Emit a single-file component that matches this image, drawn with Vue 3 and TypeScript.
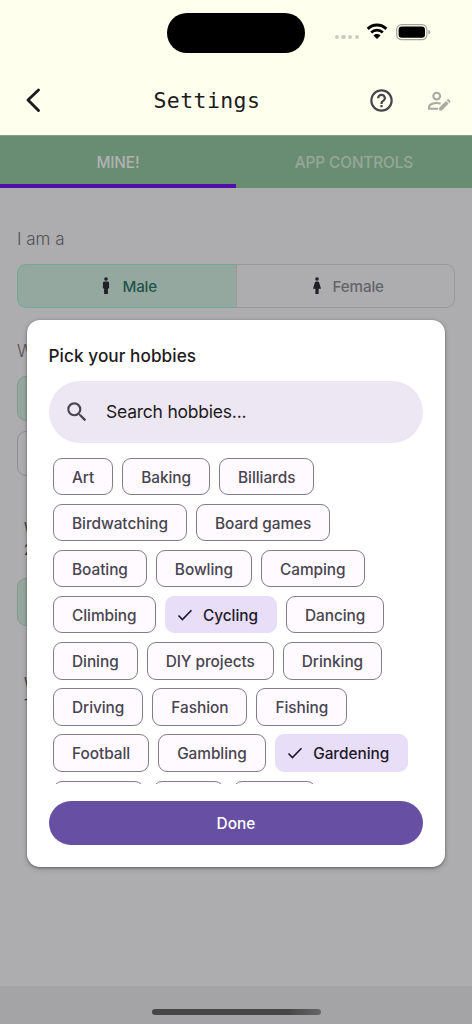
<script setup lang="ts">
interface Hobby {
  name: string
  selected?: boolean
}

const rows: Hobby[][] = [
  [{ name: 'Art' }, { name: 'Baking' }, { name: 'Billiards' }],
  [{ name: 'Birdwatching' }, { name: 'Board games' }],
  [{ name: 'Boating' }, { name: 'Bowling' }, { name: 'Camping' }],
  [{ name: 'Climbing' }, { name: 'Cycling', selected: true }, { name: 'Dancing' }],
  [{ name: 'Dining' }, { name: 'DIY projects' }, { name: 'Drinking' }],
  [{ name: 'Driving' }, { name: 'Fashion' }, { name: 'Fishing' }],
  [{ name: 'Football' }, { name: 'Gambling' }, { name: 'Gardening', selected: true }],
]
</script>

<template>
  <div class="screen">
    <header class="top">
      <div class="island"></div>
      <div class="status">
        <span class="dots"><i></i><i></i><i></i><i></i></span>
        <svg class="wifi" viewBox="0 0 22 16">
          <path d="M1.7 5.6A13.2 13.2 0 0 1 20.3 5.6" fill="none" stroke="#000" stroke-width="2.9" />
          <path d="M5.2 9.3A8.3 8.3 0 0 1 16.8 9.3" fill="none" stroke="#000" stroke-width="2.7" />
          <path d="M11 15.7L7.5 12.2A5 5 0 0 1 14.5 12.2Z" />
        </svg>
        <svg class="battery" viewBox="0 0 35 17">
          <rect x=".7" y=".7" width="30.2" height="15" rx="4.8" fill="none" stroke="#a4a599" stroke-width="1.2" />
          <rect x="2.6" y="2.6" width="26.4" height="11.2" rx="3.2" />
          <path d="M32.4 5.8q1.9.7 1.9 2.4t-1.9 2.4z" fill="#a4a599" />
        </svg>
      </div>
      <div class="bar">
        <svg class="back" viewBox="0 0 16 26"><path d="M13.5 3L3 13L13.5 23.5" fill="none" stroke="#1d1b20" stroke-width="2.9" stroke-linecap="round" stroke-linejoin="round" /></svg>
        <h1>Settings</h1>
        <svg class="help" viewBox="0 0 24 24"><path d="M11 18h2v-2h-2v2m1-16A10 10 0 0 0 2 12a10 10 0 0 0 10 10 10 10 0 0 0 10-10A10 10 0 0 0 12 2m0 18c-4.41 0-8-3.59-8-8s3.59-8 8-8 8 3.59 8 8-3.59 8-8 8m0-14a4 4 0 0 0-4 4h2a2 2 0 0 1 2-2 2 2 0 0 1 2 2c0 2-3 1.75-3 5h2c0-2.25 3-2.5 3-5a4 4 0 0 0-4-4z" /></svg>
        <svg class="edit" viewBox="0 0 24 20">
          <circle cx="9.7" cy="5.1" r="3.4" fill="none" stroke="#aaa9a2" stroke-width="2.1" />
          <path d="M11.2 17.8H2.1V16C2.1 13.3 6.7 12 9.7 12Q11.6 12 13.6 12.6" fill="none" stroke="#aaa9a2" stroke-width="2.1" />
          <path d="M12.2 16.8L19 10L21.6 12.6L14.8 19.4H12.2ZM19.7 9.3L20.7 8.3Q21.2 7.9 21.7 8.3L23.3 9.9Q23.7 10.4 23.3 10.9L22.3 11.9Z" />
        </svg>
      </div>
    </header>

    <nav class="tabs">
      <div class="tab active">MINE!</div>
      <div class="tab">APP CONTROLS</div>
    </nav>

    <main class="form">
      <p class="label">I am a</p>
      <div class="segments">
        <div class="seg on">
          <svg viewBox="0 0 10 18"><circle cx="5" cy="2" r="1.8" /><path d="M3.4 4.6h3.2a1.5 1.5 0 0 1 1.5 1.5v5.3H6.9V17H3.1v-5.6H1.9V6.1a1.5 1.5 0 0 1 1.5-1.5z" /></svg>
          Male
        </div>
        <div class="seg">
          <svg viewBox="0 0 10 18"><circle cx="5" cy="2" r="1.8" /><path d="M4.3 4.6h1.4q1.1 0 1.5 1.2L9 11.7H6.6V17H3.4v-5.3H1l1.8-5.9q.4-1.2 1.5-1.2z" /></svg>
          Female
        </div>
      </div>
      <p class="label second">W</p>
      <div class="field green"></div>
      <div class="field plain"></div>
      <div class="note"><span>W</span><span>2</span></div>
      <div class="field green tall"></div>
      <div class="note last"><span>W</span><span>T</span></div>
    </main>
    <footer><div class="home"></div></footer>

    <section class="modal">
      <h2>Pick your hobbies</h2>
      <div class="search">
        <svg viewBox="0 0 24 24"><path d="M9.5 3A6.5 6.5 0 0 1 16 9.5c0 1.61-.59 3.09-1.56 4.23l.27.27h.79l5 5-1.5 1.5-5-5v-.79l-.27-.27A6.52 6.52 0 0 1 9.5 16 6.5 6.5 0 0 1 3 9.5 6.5 6.5 0 0 1 9.5 3m0 2C7 5 5 7 5 9.5S7 14 9.5 14 14 12 14 9.5 12 5 9.5 5z" /></svg>
        <span>Search hobbies...</span>
      </div>
      <div class="list">
        <div v-for="(row, r) in rows" :key="r" class="row">
          <div v-for="h in row" :key="h.name" class="chip" :class="{ picked: h.selected }">
            <svg v-if="h.selected" viewBox="0 0 16 14"><path d="M1.5 7.5L5.4 11.6L14.5 2.2" fill="none" stroke="#1d192b" stroke-width="1.6" /></svg>
            <span>{{ h.name }}</span>
          </div>
        </div>
        <div class="row">
          <div class="chip next-a"></div>
          <div class="chip next-b"></div>
          <div class="chip next-c"></div>
        </div>
      </div>
      <button class="done" type="button">Done</button>
    </section>
  </div>
</template>

<style>
body { margin: 0; }
</style>

<style scoped>
* { box-sizing: border-box; }
.screen {
  position: relative;
  display: flex;
  flex-direction: column;
  width: 472px;
  height: 1024px;
  overflow: hidden;
  background: #adadaf;
  font-family: Inter, "Liberation Sans", sans-serif;
}
.top {
  position: relative;
  height: 135px;
  flex: none;
  padding-top: 65px;
  background: #feffed;
}
.island {
  position: absolute;
  left: 167px;
  top: 12.5px;
  width: 138px;
  height: 40.5px;
  border-radius: 21px;
  background: #000;
}
.status {
  position: absolute;
  left: 334px;
  top: 23px;
  display: flex;
  align-items: flex-start;
}
.dots { display: flex; gap: 2.5px; padding: 12px 0 0 .7px; }
.dots i { width: 4.2px; height: 4.2px; border-radius: 50%; background: #cccdbf; }
.wifi { width: 22px; height: 16.5px; margin-left: 7.5px; }
.battery { width: 35px; height: 17px; margin: .8px 0 0 8px; }
.bar { display: flex; align-items: center; height: 70px; }
.back { width: 16px; height: 26px; margin-left: 25px; }
h1 {
  width: 110px;
  margin: 2px 0 0 112.5px;
  color: #1d1b20;
  font: 400 21.5px/30px "DejaVu Sans Mono", monospace;
  letter-spacing: .4px;
}
.help { width: 27px; height: 27px; margin-left: 104.5px; fill: #49454f; }
.edit { width: 24px; height: 20px; margin: 1px 0 0 31.5px; fill: #aaa9a2; }
.tabs {
  display: flex;
  height: 53px;
  flex: none;
  background: #698d72;
  border-top: 1px solid #87a188;
}
.tab {
  flex: 1;
  text-align: center;
  padding-top: 1px;
  font-size: 15.3px;
  font-weight: 500;
  letter-spacing: -.08px;
  line-height: 51px;
  color: #98a69a;
}
.active { color: #b2b2b4; border-bottom: 4.5px solid #4f10a8; }
.form { flex: 1; padding: 40px 17px 0; }
.label { margin: 0; color: #535257; font-size: 17px; font-weight: 300; line-height: 22px; }
.segments {
  display: flex;
  height: 44px;
  margin-top: 14px;
}
.seg {
  flex: 1;
  display: flex;
  align-items: center;
  justify-content: center;
  padding-left: 5px;
  border: 1px solid #98989a;
  border-left: 0;
  border-radius: 0 9px 9px 0;
  color: #646468;
  font-size: 15.2px;
  font-weight: 500;
  letter-spacing: -.15px;
}
.seg svg { width: 10px; height: 18px; margin-right: 11px; fill: #211f28; }
.on {
  border: 1px solid #73a898;
  border-right-color: #98989a;
  border-radius: 9px 0 0 9px;
  background: #95a89f;
  color: #23534a;
}
.second { margin-top: 32px; }
.field { width: 300px; height: 45px; border: 1px solid #909092; border-radius: 9px; }
.green { margin-top: 14px; background: #95a89f; border-color: #84998e; }
.plain { margin-top: 10px; }
.note {
  display: flex;
  flex-direction: column;
  margin: 41px 0 0 7px;
  height: 44px;
  color: #3a383d;
  font-size: 14px;
  line-height: 22px;
}
.tall { height: 48px; margin-top: 17px; }
.last { margin-top: 46px; }
footer {
  display: flex;
  justify-content: center;
  height: 38px;
  flex: none;
  padding-top: 23px;
  background: #a4a4a6;
}
.home { width: 169px; height: 6px; border-radius: 3px; background: linear-gradient(90deg, #464646 80%, #656567); }
.modal {
  position: absolute;
  left: 26.5px;
  top: 319.5px;
  width: 418.9px;
  height: 547px;
  padding: 23px 22px 0;
  border-radius: 13px;
  background: #fff;
  box-shadow: 0 1px 3px rgba(0, 0, 0, .4), 0 2px 7px rgba(0, 0, 0, .12);
}
h2 { margin: 0; color: #1d1b20; font-size: 17.2px; font-weight: 500; line-height: 26px; letter-spacing: .06px; }
.search {
  display: flex;
  align-items: center;
  height: 62px;
  margin-top: 12.5px;
  padding-left: 15.5px;
  border-radius: 31px;
  background: #ede7f4;
  color: #1d1b20;
  font-size: 17.5px;
  letter-spacing: -.22px;
}
.search svg { width: 26px; height: 26px; margin-right: 16px; fill: #49454f; }
.search span { padding-bottom: 1px; }
.list {
  display: flex;
  flex-direction: column;
  gap: 8.9px;
  height: 325.5px;
  margin-top: 15px;
  padding-left: 4.5px;
  overflow: hidden;
}
.row { display: flex; gap: 9px; flex: none; height: 37.2px; }
.chip {
  display: flex;
  align-items: center;
  padding: 0 18px;
  border: 1px solid #827e89;
  border-radius: 9px;
  background: #fefaff;
  color: #49454f;
  font-size: 15.4px;
  font-weight: 500;
  letter-spacing: -.05px;
}
.chip span { padding-top: 1px; }
.picked { border-color: #e8def8; background: #e8def8; color: #1d192b; padding-left: 11px; }
.picked svg { width: 16px; height: 14px; margin-right: 10.5px; }
.next-a { width: 90.5px; }
.next-b { width: 71px; }
.next-c { width: 83px; }
.done {
  display: block;
  width: 100%;
  height: 44px;
  margin-top: 17px;
  padding: 1px 0 0;
  border: 0;
  border-radius: 22px;
  background: #674fa3;
  color: #fff;
  font: 500 15.4px Inter, "Liberation Sans", sans-serif;
}
</style>
